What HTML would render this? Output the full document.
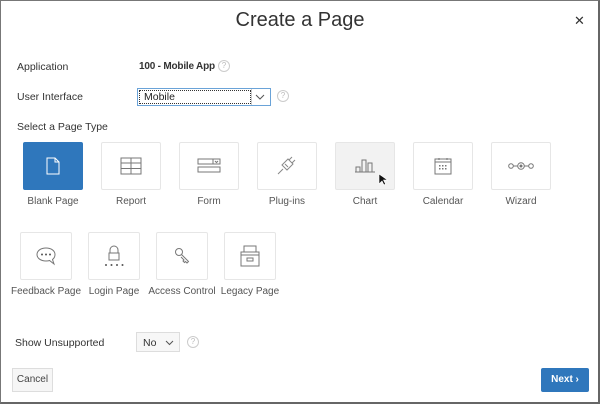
<!DOCTYPE html>
<html><head><style>
*{box-sizing:border-box;margin:0;padding:0}
body{width:600px;height:404px;background:#fff;font-family:"Liberation Sans",Arial,sans-serif;color:#333;position:relative;overflow:hidden;font-size:11px}
.frame{position:absolute;left:0;top:0;width:600px;height:404px;border:1px solid #777;border-right:2px solid #666;border-bottom:2px solid #666}
.abs{position:absolute}
.title{left:0;width:600px;top:9px;text-align:center;font-size:20px;color:#333}
.x{left:574px;top:13px;font-size:13px;color:#333}
.lbl{font-size:10.5px;color:#333}
.help{width:12px;height:12px;border:1px solid #ccc;border-radius:50%;font-size:8px;color:#bbb;text-align:center;line-height:10px}
.tile{position:absolute;width:60px;height:48px;border:1px solid #e6e6e6;border-radius:2px;background:#fff;display:flex;align-items:center;justify-content:center}
.cap{position:absolute;width:90px;text-align:center;font-size:10px;color:#555}
</style></head><body>
<div class="frame"></div>
<div class="abs title">Create a Page</div>
<div class="abs x">✕</div>
<div class="abs lbl" style="left:17px;top:61px">Application</div>
<div class="abs lbl" style="left:139px;top:61px;font-weight:bold;font-size:10px;letter-spacing:-0.2px">100 - Mobile App</div>
<div class="abs help" style="left:218px;top:60px">?</div>
<div class="abs lbl" style="left:17px;top:91px">User Interface</div>
<div class="abs" style="left:137px;top:88px;width:134px;height:18px;border:1px solid #6aa3d8;background:#fff"><div style="position:absolute;left:1px;top:1px;width:112px;height:14px;border:1px dotted #333;font-size:10.5px;padding-left:4px;line-height:13px;color:#222">Mobile</div><div style="position:absolute;left:113px;top:0;width:1px;height:16px;background:#ccc"></div><svg style="position:absolute;left:117px;top:5px" width="10" height="6"><path d="M1 1l4 4 4-4" fill="none" stroke="#555"/></svg></div>
<div class="abs help" style="left:277px;top:90px">?</div>
<div class="abs lbl" style="left:17px;top:121px">Select a Page Type</div>

<div class="tile" style="left:23px;top:142px;background:#2f77bc;border-color:#2f77bc"><svg width="14" height="18" viewBox="0 0 14 18"><path d="M1 1h8l4 4v12H1z" fill="none" stroke="#fff"/><path d="M9 1v4h4" fill="none" stroke="#fff"/></svg></div>
<div class="tile" style="left:101px;top:142px"><svg width="22" height="18"><rect x="1" y="1" width="20" height="16" fill="none" stroke="#777"/><path d="M1 6h20M1 11.5h20M11 1v16" stroke="#777"/></svg></div>
<div class="tile" style="left:179px;top:142px"><svg width="24" height="16"><rect x="1" y="1" width="22" height="5" fill="none" stroke="#777"/><rect x="1" y="9" width="22" height="5" fill="none" stroke="#777"/><path d="M16 1v5M18 3l1.5 1.5L21 3" stroke="#777" fill="none"/></svg></div>
<div class="tile" style="left:257px;top:142px"><svg width="22" height="22"><path d="M6 10l6-6 5 5-6 6z" fill="none" stroke="#888"/><path d="M13 5l3-3M16 8l3-3M7 14l-5 5M9 9l3 3" stroke="#888" fill="none"/></svg></div>
<div class="tile" style="left:335px;top:142px;background:#f2f2f2"><svg width="22" height="14"><path d="M1 13h20M2 13V8h4v5M8 13V1h4v12M14 13V4h4v9" stroke="#777" fill="none"/></svg></div>
<div class="tile" style="left:413px;top:142px"><svg width="18" height="18"><rect x="1" y="2" width="16" height="15" fill="none" stroke="#777"/><path d="M1 5h16M5 1v2M13 1v2" stroke="#777"/><g fill="#777"><rect x="5" y="8" width="1.5" height="1.5"/><rect x="8" y="8" width="1.5" height="1.5"/><rect x="11" y="8" width="1.5" height="1.5"/><rect x="5" y="11" width="1.5" height="1.5"/><rect x="8" y="11" width="1.5" height="1.5"/><rect x="11" y="11" width="1.5" height="1.5"/></g></svg></div>
<div class="tile" style="left:491px;top:142px"><svg width="26" height="10"><circle cx="3" cy="5" r="2.3" fill="none" stroke="#777"/><circle cx="13" cy="5" r="3.3" fill="none" stroke="#777"/><circle cx="13" cy="5" r="1.5" fill="#777"/><circle cx="23" cy="5" r="2.3" fill="none" stroke="#777"/><path d="M5.3 5h4.4M16.3 5h4.4" stroke="#777"/></svg></div>
<svg class="abs" style="left:378px;top:173px" width="10" height="14"><path d="M1 1v10l3-3 2 4 1.5-1-2-4h4z" fill="#111" stroke="#fff" stroke-width=".6"/></svg>

<div class="cap" style="left:8px;top:196px">Blank Page</div>
<div class="cap" style="left:86px;top:196px">Report</div>
<div class="cap" style="left:164px;top:196px">Form</div>
<div class="cap" style="left:242px;top:196px">Plug-ins</div>
<div class="cap" style="left:320px;top:196px">Chart</div>
<div class="cap" style="left:398px;top:196px">Calendar</div>
<div class="cap" style="left:476px;top:196px">Wizard</div>

<div class="tile" style="left:20px;top:232px;width:52px"><svg width="22" height="20"><path d="M11 2C5.5 2 2 5 2 8.5 2 12 5.5 15 11 15c1.5 0 2.5 0 3.5-.5L19 18l-1.5-4.5C19.5 12 20 10.5 20 8.5 20 5 16.5 2 11 2z" fill="none" stroke="#777"/><circle cx="7" cy="8.5" r="1" fill="#555"/><circle cx="11" cy="8.5" r="1" fill="#555"/><circle cx="15" cy="8.5" r="1" fill="#555"/></svg></div>
<div class="tile" style="left:88px;top:232px;width:52px"><svg width="22" height="22"><path d="M7 8V5a4 4 0 0 1 8 0v3" fill="none" stroke="#777"/><rect x="6" y="8" width="10" height="7" fill="none" stroke="#777"/><g fill="#555"><circle cx="3" cy="20" r="1"/><circle cx="8.5" cy="20" r="1"/><circle cx="14" cy="20" r="1"/><circle cx="19.5" cy="20" r="1"/></g></svg></div>
<div class="tile" style="left:156px;top:232px;width:52px"><svg width="16" height="18"><circle cx="5" cy="5" r="3.5" fill="none" stroke="#777"/><path d="M7.5 7.5l7 7-1.5 1.5-1.5-1.5-1 1-1.5-1.5 1-1-3-3" fill="none" stroke="#777"/></svg></div>
<div class="tile" style="left:224px;top:232px;width:52px"><svg width="20" height="22"><rect x="1" y="7" width="18" height="14" fill="none" stroke="#777"/><path d="M4 7V1h12v6M1 10h18" fill="none" stroke="#777"/><rect x="7" y="13" width="6" height="3" fill="none" stroke="#777"/></svg></div>

<div class="cap" style="left:1px;top:286px">Feedback Page</div>
<div class="cap" style="left:69px;top:286px">Login Page</div>
<div class="cap" style="left:137px;top:286px">Access Control</div>
<div class="cap" style="left:205px;top:286px">Legacy Page</div>

<div class="abs lbl" style="left:15px;top:337px">Show Unsupported</div>
<div class="abs" style="left:136px;top:332px;width:44px;height:20px;border:1px solid #ddd;background:#f7f7f7;font-size:10.5px;padding:4px 0 0 6px">No<svg style="position:absolute;left:28px;top:7px" width="9" height="6"><path d="M1 1l3.5 3.5L8 1" fill="none" stroke="#555"/></svg></div>
<div class="abs help" style="left:187px;top:336px">?</div>

<div class="abs" style="left:12px;top:368px;width:41px;height:24px;border:1px solid #ddd;background:#f6f6f6;font-size:10px;text-align:center;line-height:22px;color:#444">Cancel</div>
<div class="abs" style="left:541px;top:368px;width:48px;height:24px;background:#2f77bc;border-radius:2px;color:#fff;font-weight:bold;font-size:10px;text-align:center;line-height:24px">Next ›</div>
</body></html>
